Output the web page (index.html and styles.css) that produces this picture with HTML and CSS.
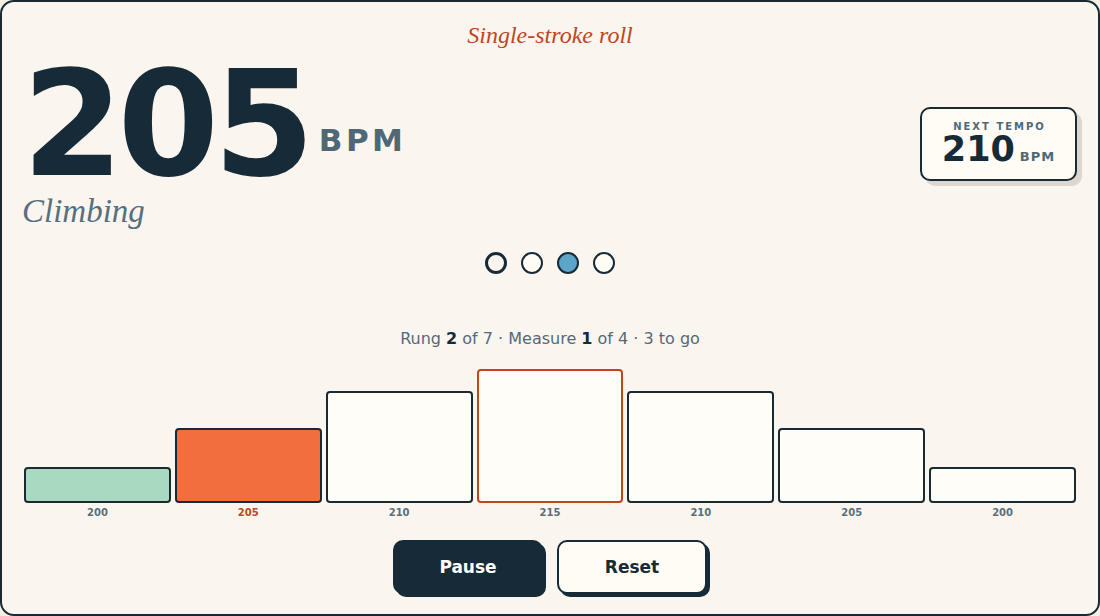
FILE: index.html
```html
<!DOCTYPE html>
<html lang="en">
<head>
<meta charset="utf-8">
<title>Tempo Ladder</title>
<link rel="stylesheet" href="styles.css">
</head>
<body>
<main class="app">
  <h1 class="title">Single-stroke roll</h1>
  <section class="hero">
    <div class="tempo">
      <div class="big">
        <span class="num">205</span>
        <span class="unit">BPM</span>
      </div>
      <div class="phase">Climbing</div>
    </div>
    <div class="next">
      <div class="next-label">NEXT TEMPO</div>
      <div class="next-value"><span class="next-num">210</span><span class="next-unit">BPM</span></div>
    </div>
  </section>
  <div class="dots">
    <span class="dot dot-current"></span>
    <span class="dot"></span>
    <span class="dot dot-fill"></span>
    <span class="dot"></span>
  </div>
  <p class="status">Rung <b>2</b> of 7 · Measure <b>1</b> of 4 · 3 to go</p>
  <div class="ladder">
    <div class="rung"><div class="bar bar-done" style="height:36px"></div><span class="label">200</span></div>
    <div class="rung"><div class="bar bar-active" style="height:75px"></div><span class="label label-active">205</span></div>
    <div class="rung"><div class="bar" style="height:112px"></div><span class="label">210</span></div>
    <div class="rung"><div class="bar bar-peak" style="height:134px"></div><span class="label">215</span></div>
    <div class="rung"><div class="bar" style="height:112px"></div><span class="label">210</span></div>
    <div class="rung"><div class="bar" style="height:75px"></div><span class="label">205</span></div>
    <div class="rung"><div class="bar" style="height:36px"></div><span class="label">200</span></div>
  </div>
  <div class="actions">
    <button class="btn btn-primary">Pause</button>
    <button class="btn btn-secondary">Reset</button>
  </div>
</main>
</body>
</html>
```

FILE: styles.css
```css
html, body {
  margin: 0;
  padding: 0;
  background: #f3efe7;
}

.app {
  box-sizing: border-box;
  width: 1100px;
  height: 616px;
  border: 2px solid #1a2a33;
  border-radius: 14px;
  background: #faf6ef;
  font-family: "DejaVu Sans", sans-serif;
  color: #172a38;
  display: flex;
  flex-direction: column;
  overflow: hidden;
}

.title {
  margin: 21px 0 0;
  text-align: center;
  font-family: "Liberation Serif", serif;
  font-style: italic;
  font-weight: 400;
  font-size: 24px;
  line-height: 24px;
  color: #c2451e;
}

.hero {
  display: flex;
  justify-content: space-between;
  align-items: flex-start;
  padding: 0 21px 0 20px;
  margin-top: 17px;
}

.big {
  display: flex;
  align-items: flex-end;
}

.num {
  font-weight: 700;
  font-size: 146px;
  line-height: 120px;
  letter-spacing: -6px;
  color: #172a38;
}

.unit {
  font-weight: 700;
  font-size: 31px;
  line-height: 31px;
  letter-spacing: 3.5px;
  color: #4f6878;
  margin: 0 0 28px 10px;
}

.phase {
  margin-top: 11px;
  font-family: "Liberation Serif", serif;
  font-style: italic;
  font-size: 33px;
  line-height: 33px;
  color: #557080;
}

.next {
  margin-top: 43px;
  box-sizing: border-box;
  width: 157px;
  height: 74px;
  border: 2px solid #1a2a33;
  border-radius: 10px;
  background: #fffcf6;
  box-shadow: 5px 5px 0 #dcd8cf;
  display: flex;
  flex-direction: column;
  align-items: center;
  padding-top: 12px;
}

.next-label {
  font-size: 10px;
  line-height: 12px;
  font-weight: 700;
  letter-spacing: 2px;
  color: #4f6878;
  margin-left: 2px;
}

.next-value {
  display: flex;
  align-items: baseline;
  margin-top: -2px;
}

.next-num {
  font-size: 35px;
  line-height: 36px;
  font-weight: 700;
  color: #172a38;
}

.next-unit {
  font-size: 13px;
  font-weight: 700;
  letter-spacing: 1px;
  color: #4f6878;
  margin-left: 5px;
}

.dots {
  display: flex;
  justify-content: center;
  gap: 14px;
  margin-top: 24px;
}

.dot {
  box-sizing: border-box;
  width: 22px;
  height: 22px;
  border-radius: 50%;
  border: 2px solid #172a38;
  background: #fffcf6;
}

.dot-current {
  border-width: 3px;
  background: #faf6ef;
}

.dot-fill {
  background: #5aa5c8;
}

.status {
  margin: 56px 0 0;
  text-align: center;
  font-size: 16px;
  line-height: 18px;
  color: #56697a;
}

.status b {
  color: #172a38;
}

.ladder {
  display: grid;
  grid-template-columns: repeat(7, 1fr);
  gap: 4px;
  padding: 0 22px;
  margin-top: 19px;
  height: 152px;
  align-items: end;
}

.rung {
  display: flex;
  flex-direction: column;
}

.bar {
  box-sizing: border-box;
  border: 2px solid #1a2a33;
  border-radius: 4px;
  background: #fffdf7;
}

.bar-done {
  background: #a9d9c1;
}

.bar-active {
  background: #f26e3e;
}

.bar-peak {
  border-color: #c2451e;
}

.label {
  margin-top: 4px;
  text-align: center;
  font-size: 10px;
  line-height: 12px;
  font-weight: 700;
  color: #5a6e7c;
}

.label-active {
  color: #c2451e;
}

.actions {
  display: flex;
  justify-content: center;
  gap: 14px;
  margin-top: 21px;
}

.btn {
  box-sizing: border-box;
  width: 150px;
  height: 54px;
  border: 2px solid #172a38;
  border-radius: 10px;
  font-family: "DejaVu Sans", sans-serif;
  font-size: 17px;
  font-weight: 700;
  box-shadow: 3px 3px 0 #172a38;
  cursor: pointer;
}

.btn-primary {
  background: #172a38;
  color: #ffffff;
}

.btn-secondary {
  background: #fffcf6;
  color: #172a38;
}
```
